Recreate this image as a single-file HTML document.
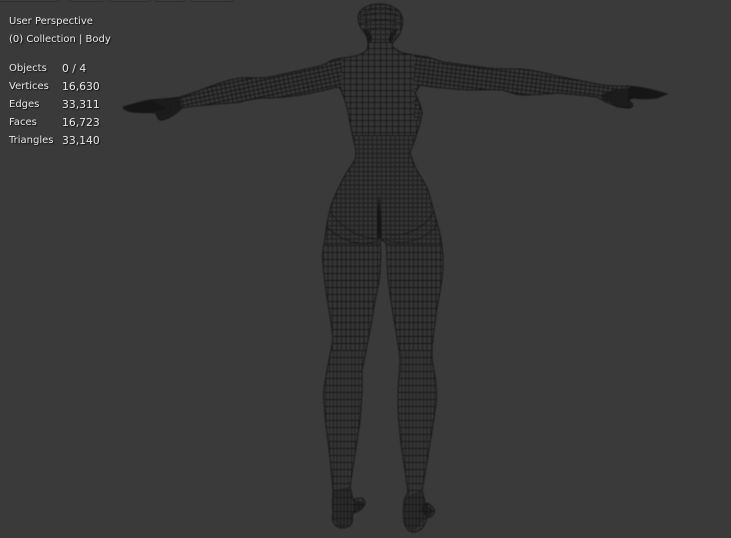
<!DOCTYPE html>
<html><head><meta charset="utf-8"><title>User Perspective</title>
<style>
html,body{margin:0;padding:0;background:#3a3a3a;}
#v{position:relative;width:731px;height:538px;overflow:hidden;background:#3a3a3a;font-family:"DejaVu Sans",sans-serif;font-size:10px;color:#e8e8e8;text-shadow:1px 1px 1px rgba(0,0,0,.7);}
#v svg{position:absolute;left:0;top:0;}
.t{position:absolute;white-space:nowrap;line-height:14px;}
.n{font-size:10.8px;}
.tab{position:absolute;top:-5px;height:5px;border:1px solid #303030;border-radius:3px;background:#3c3c3c;}
</style></head><body>
<div id="v">
<div class="tab" style="left:-3px;width:61px"></div>
<div class="tab" style="left:68px;width:35px"></div>
<div class="tab" style="left:108px;width:41px"></div>
<div class="tab" style="left:154px;width:30px"></div>
<div class="tab" style="left:189px;width:43px"></div>
<svg width="731" height="538" viewBox="0 0 731 538" xmlns="http://www.w3.org/2000/svg">
<defs>
<pattern id="gT" width="6" height="6" patternUnits="userSpaceOnUse" patternTransform="translate(380 0)"><rect width="6" height="6" fill="#363636"/><path d="M.5 0V6M0 .5H6" stroke="#191919" stroke-width="1" fill="none"/></pattern>
<pattern id="gH" width="5" height="5" patternUnits="userSpaceOnUse" patternTransform="translate(380 4)"><rect width="5" height="5" fill="#353535"/><path d="M.5 0V5M0 .5H5" stroke="#1a1a1a" stroke-width="1" fill="none"/></pattern>
<pattern id="gHip" width="4.5" height="4.5" patternUnits="userSpaceOnUse" patternTransform="translate(381 0)"><rect width="4.5" height="4.500" fill="#343434"/><path d="M.5 0V4.500M0 .5H4.500" stroke="#1a1a1a" stroke-width="1" fill="none"/></pattern>
<pattern id="gL" width="4.5" height="7" patternUnits="userSpaceOnUse" patternTransform="translate(350 245)"><rect width="4.500" height="7" fill="#363636"/><path d="M.5 0V7" stroke="#1f1f1f" stroke-width="1" fill="none"/><path d="M0 .5H4.500" stroke="#161616" stroke-width="1" fill="none"/></pattern>
<pattern id="gC" width="3.6" height="7" patternUnits="userSpaceOnUse" patternTransform="translate(340 350)"><rect width="3.600" height="7" fill="#343434"/><path d="M.5 0V7" stroke="#222" stroke-width="1" fill="none"/><path d="M0 .5H3.600" stroke="#161616" stroke-width="1" fill="none"/></pattern>
<pattern id="gAL" width="4.5" height="4" patternUnits="userSpaceOnUse" patternTransform="rotate(-12 300 80)"><rect width="4.500" height="4" fill="#343434"/><path d="M.5 0V4" stroke="#1a1a1a" stroke-width="1" fill="none"/><path d="M0 .5H4.500" stroke="#171717" stroke-width="1" fill="none"/></pattern>
<pattern id="gAR" width="4.5" height="4" patternUnits="userSpaceOnUse" patternTransform="rotate(7 480 80)"><rect width="4.500" height="4" fill="#343434"/><path d="M.5 0V4" stroke="#1a1a1a" stroke-width="1" fill="none"/><path d="M0 .5H4.500" stroke="#171717" stroke-width="1" fill="none"/></pattern>
<path id="body" d="M380 4C368 4 358 9 358 18C358 26 364 31 367 37C368.500 43 368.500 47 367 50C362 55 356 56 350 57C344 58 338 58 333 60C328 62 324 65 320 66L270 77C258 79 250 77 240 78C232 79 226 81 220 83C205 88 192 94 180 97C170 99 160 99 150 100C140 102 130 105 123 107L124 109C128 111 130 112 133 112C140 113 148 112 155 113C158 114 156 116 158 118C159 120 161 120 163 120C170 118 176 114 182 108C200 105 220 104 240 102C247 100 253 99 260 98C275 98 287 97 300 95C312 93 325 90 337 87L340 88C343 94 345 100 347 107C349 118 351 127 353 137C355 144 356 150 356 157C354 163 351 166 347 172C342 180 337 191 332 203C328 215 326 228 325 240C323 248 322 255 323 263C324 278 326 291 328 303C330 315 332 327 333 340C330 355 327 370 325 383C324 390 323 395 324 400C325 415 326 428 328 440C330 458 332 474 333 490C333 497 332 505 333 513C332 518 332 521 334 523C336 527 339 528 342 528C347 528 351 526 352 522C353 519 352 516 353 513C357 512 360 511 362 508C364 506 366 504 365 502C364 499 362 498 360 498C357 498 355 499 353 500C352 496 351 491 350 487C353 465 357 442 360 420C361 407 362 395 362 383C362 378 362 374 362 370C364 360 366 350 368 340C371 327 373 313 375 300C378 289 380 278 380 267C381 258 381 249 380 242L383 240L386 243C387 254 387 266 388 277C390 298 394 318 397 337C398 345 400 352 400 360C400 372 398 385 398 397C398 417 400 437 403 457C405 470 407 482 408 493C406 496 404 499 404 503C403 511 403 518 405 525C407 530 410 532 413 532C418 532 421 530 423 527C425 524 426 521 427 518C430 517 433 516 434 513C435 511 434 509 433 508C431 505 428 503 425 503C424 498 423 494 422 490C427 462 432 432 436 403C437 394 436 385 435 377C434 370 432 363 432 357C432 352 432 348 432 345C434 332 435 320 437 307C440 292 443 277 443 263C443 249 441 236 437 223C434 212 431 201 428 190C424 182 419 174 415 167C413 161 411 157 410 153C412 146 415 140 417 133C419 127 421 120 422 113C421 106 418 99 415 93L420 85C437 88 453 89 470 90C481 90 492 89 503 90C509 92 514 94 520 95C533 95 545 94 557 93C570 94 584 95 597 97C602 100 607 103 613 105C618 107 624 108 630 108L633 106C633 103 630 102 628 100L633 98C641 99 649 99 657 98L667 94C657 91 647 88 637 87C625 85 614 87 603 85C587 82 570 79 553 75C542 72 531 70 520 69C509 69 498 69 487 68C472 66 457 64 443 62C437 60 432 58 427 57C419 56 411 55 403 53C399 52 396 50 393 47C392 45 392 44 393 42C396 39 399 36 400 33C402 28 403 22 402 17C400 9 391 4 380 4Z"/>
<clipPath id="bc"><use href="#body"/></clipPath>
<filter id="s" x="-2%" y="-2%" width="104%" height="104%"><feGaussianBlur stdDeviation=".4"/></filter>
</defs>
<g filter="url(#s)">
<g clip-path="url(#bc)">
<rect x="320" y="0" width="130" height="538" fill="#343434"/>
<rect x="120" y="60" width="560" height="60" fill="#323232"/>
<rect x="350" y="0" width="60" height="45" fill="url(#gH)"/>
<rect x="335" y="42" width="92" height="93" fill="url(#gT)"/>
<rect x="315" y="135" width="135" height="110" fill="url(#gHip)"/>
<rect x="315" y="245" width="135" height="105" fill="url(#gL)"/>
<rect x="315" y="350" width="135" height="190" fill="url(#gC)"/>
<rect x="120" y="50" width="222" height="80" fill="url(#gAL)"/>
<rect x="414" y="50" width="260" height="70" fill="url(#gAR)"/>
<g fill="none" stroke="#1a1a1a" stroke-width=".9">
<path d="M360 13C372 6 390 6 401 13M359 18C372 11 390 11 402 18M359 24C372 19 390 19 402 24M364 31C373 27 388 27 398 31"/>
<path d="M372 5C364 14 366 28 372 38M389 5C396 14 395 28 389 38"/>
<path d="M330 212C345 232 365 240 380 238M326 226C345 245 365 246 380 240M386 240C405 246 425 240 438 224M386 234C405 238 425 228 434 212"/>
</g>
<path d="M122 107C132 102 142 101 152 100L166 108C160 112 145 113 133 112C128 111 125 109 122 107Z" fill="#141414"/>
<path d="M152 100C160 99 170 98 180 97L182 108C176 114 170 118 163 120C158 120 157 116 155 113Z" fill="#1a1a1a" opacity=".8"/>
<path d="M628 88C640 87 650 90 667 94L657 98H633L628 100Z" fill="#141414"/>
<path d="M600 96C605 92 615 88 630 88L628 100L633 106L630 108C620 108 608 103 600 96Z" fill="#1a1a1a" opacity=".8"/>
<path d="M379 195C377 210 377 228 378 238L382 238C381 224 381 208 379 195Z" fill="#131313"/>
<path d="M415 93L422 113L417 133L410 153L415 167L418 165C415 155 417 145 420 130C424 118 424 103 415 93Z" fill="#131313"/>
<path d="M363 28C366 33 368 38 368 44L372 40C371 34 368 30 363 28ZM398 28C395 33 393 38 392 44L388 40C390 34 393 30 398 28Z" fill="#171717" opacity=".8"/>
<path d="M333 490L350 487L353 513L352 522L342 528L333 520Z" fill="#1c1c1c" opacity=".3"/>
<path d="M404 498L422 490L427 518L413 532L405 525Z" fill="#1c1c1c" opacity=".3"/>
<path d="M353 500L365 502L362 508L353 513ZM425 503L434 511L427 518L421 510Z" fill="#141414" opacity=".6"/>
</g>
<use href="#body" fill="none" stroke="#171717" stroke-width="1"/>
</g>
</svg>
<div class="t" style="left:9px;top:15px">User Perspective</div>
<div class="t" style="left:9px;top:33px">(0) Collection | Body</div>
<div class="t" style="left:9px;top:62px">Objects</div><div class="t n" style="left:62px;top:62px">0 / 4</div>
<div class="t" style="left:9px;top:80px">Vertices</div><div class="t n" style="left:62px;top:80px">16,630</div>
<div class="t" style="left:9px;top:98px">Edges</div><div class="t n" style="left:62px;top:98px">33,311</div>
<div class="t" style="left:9px;top:116px">Faces</div><div class="t n" style="left:62px;top:116px">16,723</div>
<div class="t" style="left:9px;top:134px">Triangles</div><div class="t n" style="left:62px;top:134px">33,140</div>
</div>
</body></html>
